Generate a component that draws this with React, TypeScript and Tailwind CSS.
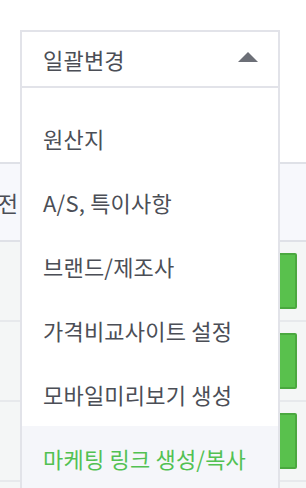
import React from 'react';

const items = ['원산지', 'A/S, 특이사항', '브랜드/제조사', '가격비교사이트 설정', '모바일미리보기 생성', '마케팅 링크 생성/복사'];

export default function App() {
    const active = 5;

    return (
        <div
            className="relative w-[306px] h-[488px] overflow-hidden bg-white"
            style={{ fontFamily: '"Noto Sans CJK KR", "Noto Sans", sans-serif' }}
        >
            {/* bảng phía sau */}
            <div className="pt-[162px]">
                <div className="h-[80px] flex items-center border-t-2 border-b-2 border-[#dfe1e7] bg-[#f7f8fc]">
                    <span className="w-[18px] flex justify-end whitespace-nowrap text-[22px] text-[#4b4e56]">전</span>
                </div>
                {[0, 1, 2, 3].map((i) => (
                    <div key={i} className="h-[80px] flex items-start border-b-2 border-[#e7e9ec] bg-[#f4f6f6]">
                        <div className="ml-[262px] mt-[11px] w-[35px] h-[56px] bg-[#59c14d] border-2 border-[#4aa83f] rounded-[2px]" />
                    </div>
                ))}
            </div>

            {/* dropdown */}
            <div className="absolute left-[20px] top-[30px] w-[260px] bottom-0 border-2 border-b-0 border-[#e2e3e9] bg-white">
                <div className="h-[56px] flex items-center justify-between pl-[21px] pr-[20px] border-b-2 border-[#e2e3e9]">
                    <span className="text-[22px] tracking-[0.2px] text-[#4b4e56]">일괄변경</span>
                    <span className="w-0 h-0 border-l-[10px] border-r-[10px] border-b-[10px] border-l-transparent border-r-transparent border-b-[#6c6f77] -mt-[4px]" />
                </div>
                <ul className="pt-[18px]">
                    {items.map((item, index) => (
                        <li
                            key={item}
                            className={`h-[64px] flex items-center pl-[21px] text-[22px] tracking-[0.2px] whitespace-nowrap ${
                                index === active ? 'bg-[#f5f6fa] text-[#52c152]' : 'text-[#4b4e56]'
                            }`}
                        >
                            {item}
                        </li>
                    ))}
                </ul>
            </div>
        </div>
    );
}
